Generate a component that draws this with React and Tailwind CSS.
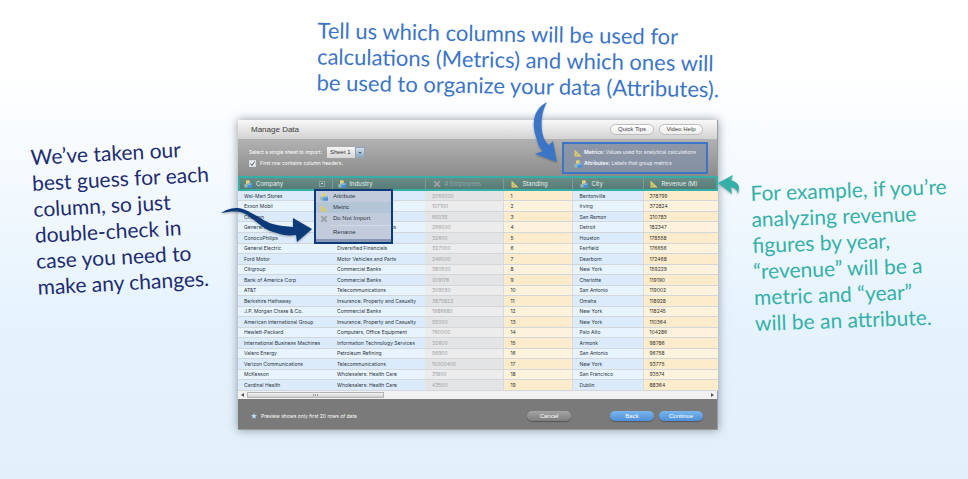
import React from "react";

const columns = [
  { label: "Company", kind: "attribute", width: "w-[94px]", pad: "pl-[6px]", menu: true },
  { label: "Industry", kind: "attribute", width: "w-[93px]", pad: "pl-[5px]" },
  { label: "# Employees", kind: "skip", width: "w-[78px]", pad: "pl-[7px]" },
  { label: "Standing", kind: "metric", width: "w-[69px]", pad: "pl-[7px]" },
  { label: "City", kind: "attribute", width: "w-[71px]", pad: "pl-[7px]" },
  { label: "Revenue (M)", kind: "metric", width: "w-[75px]", pad: "pl-[6px]" },
];

const rows = [
  ["Wal-Mart Stores", "", "2055000", "1", "Bentonville", "378799"],
  ["Exxon Mobil", "", "107100", "2", "Irving", "372824"],
  ["Chevron", "", "65035", "3", "San Ramon", "210783"],
  ["General Motors", "Motor Vehicles and Parts", "266000", "4", "Detroit", "182347"],
  ["ConocoPhilips", "", "32600", "5", "Houston", "178558"],
  ["General Electric", "Diversified Financials", "327000", "6", "Fairfield", "176656"],
  ["Ford Motor", "Motor Vehicles and Parts", "246000", "7", "Dearborn", "172468"],
  ["Citigroup", "Commercial Banks", "380500", "8", "New York", "159229"],
  ["Bank of America Corp", "Commercial Banks", "209176", "9", "Charlotte", "119190"],
  ["AT&T", "Telecommunications", "309050", "10", "San Antonio", "119002"],
  ["Berkshire Hathaway", "Insurance: Property and Casualty", "3875822", "11", "Omaha", "118928"],
  ["J.P. Morgan Chase & Co.", "Commercial Banks", "1986680", "12", "New York", "118245"],
  ["American International Group", "Insurance: Property and Casualty", "55000", "13", "New York", "110364"],
  ["Hewlett-Packard", "Computers, Office Equipment", "760000", "14", "Palo Alto", "104286"],
  ["International Business Machines", "Information Technology Services", "32600", "15", "Armonk", "98786"],
  ["Valero Energy", "Petroleum Refining", "56900", "16", "San Antonio", "96758"],
  ["Verizon Communications", "Telecommunications", "10000400", "17", "New York", "93775"],
  ["McKesson", "Wholesalers: Health Care", "31800", "18", "San Francisco", "93574"],
  ["Cardinal Health", "Wholesalers: Health Care", "43500", "19", "Dublin", "88364"],
];

const cellTone = {
  attribute: ["bg-[#dbebfb] text-[#2d333b]", "bg-[#e7f4fe] text-[#2d333b]"],
  skip: ["bg-[#e3e4e6] text-[#a0a2a5]", "bg-[#ececed] text-[#a0a2a5]"],
  metric: ["bg-[#fdeccb] text-[#33312d]", "bg-[#fdf3dc] text-[#33312d]"],
};

function KindIcon({ kind }) {
  if (kind === "attribute") {
    return (
      <svg viewBox="0 0 16 16" className="h-2 w-2 shrink-0" aria-hidden="true">
        <rect x="4" y="0.5" width="7.500" height="8" rx="2" fill="#e2cf74" />
        <rect x="0.5" y="8" width="7.5" height="7" rx="1" fill="#8fb9a8" />
        <rect x="7" y="7" width="9" height="8.500" rx="1" fill="#4a8fd9" />
        <path d="M7 7h9l-2 2.500h-7z" fill="#8cc0f0" />
      </svg>
    );
  }
  if (kind === "metric") {
    return (
      <svg viewBox="0 0 16 16" className="h-2 w-2 shrink-0" aria-hidden="true">
        <path d="M1 1v14h14.500z M4.500 9v3h3.200z" fill="#dccb6c" fillRule="evenodd" />
      </svg>
    );
  }
  return (
    <svg viewBox="0 0 16 16" className="h-2 w-2 shrink-0" aria-hidden="true">
      <path d="M2.500 2.500l11 11M13.500 2.500l-11 11" stroke="#99a0a6" strokeWidth="3.600" />
    </svg>
  );
}

function ColumnMenu() {
  const item = "flex h-[11px] w-full items-center gap-[5px] pl-[4px] text-left";
  return (
    <div
      role="menu"
      className="absolute top-[69px] left-[76px] z-20 h-[55px] w-[79px] border-2 border-[#0d3a78] bg-[#c1cbdc] text-[6px] text-[#2f3742] shadow-[inset_0_-3px_0_#8797b4]"
    >
      <button role="menuitem" className={item}>
        <KindIcon kind="attribute" />
        Attribute
      </button>
      <button role="menuitem" className={item + " bg-[#b3c5d6]"}>
        <KindIcon kind="metric" />
        Metric
      </button>
      <button role="menuitem" className={item}>
        <KindIcon kind="skip" />
        Do Not Import
      </button>
      <div className="mt-px ml-[15px] h-px bg-[#d3dae6]" />
      <button role="menuitem" className="flex h-[13px] w-full items-center pl-[17px] text-left">
        Rename
      </button>
    </div>
  );
}

function DataTable() {
  return (
    <table className="h-[215px] w-full table-fixed border-collapse font-[Inter,'Liberation_Sans',sans-serif] text-[5px] leading-[8px]">
      <thead>
        <tr className="relative z-10 h-[15px] bg-linear-to-b from-[#6c8f8b] to-[#557873] outline-2 -outline-offset-2 outline-[#35b0a8]">
          {columns.map((c) => (
            <th
              key={c.label}
              scope="col"
              className={`${c.width} ${c.pad} h-[15px] p-0 text-left text-[6px] font-normal whitespace-nowrap ${c.kind === "skip" ? "text-[#8fa8a5]" : "text-[#e4eeec]"} border-r border-[#7b9a96] last:border-r-0`}
            >
              <span className="flex items-center gap-[4px]">
                <KindIcon kind={c.kind} />
                {c.label}
                {c.menu && (
                  <button
                    aria-label="Column options"
                    className="mr-[7px] ml-auto flex h-[6px] w-[6px] items-center justify-center border border-[#86a39f]"
                  >
                    <span className="h-px w-[2px] bg-[#c4d4d2]" />
                  </button>
                )}
              </span>
            </th>
          ))}
        </tr>
      </thead>
      <tbody>
        {rows.map((row, i) => (
          <tr key={row[0]}>
            {row.map((value, j) => (
              <td
                key={columns[j].label}
                className={`${columns[j].pad} ${cellTone[columns[j].kind][i % 2]} ${j > 2 ? "border-l border-l-[#d9dadc]" : ""} border-b border-b-[#d3d7dc] p-0 whitespace-nowrap`}
              >
                {value}
              </td>
            ))}
          </tr>
        ))}
      </tbody>
    </table>
  );
}

function Arrows() {
  return (
    <>
      <svg viewBox="0 0 94 38" className="absolute top-[86px] left-[-18px] z-30 h-[38px] w-[94px] drop-shadow-[0_1px_1px_rgba(0,0,0,0.3)]" aria-hidden="true">
        <path d="M1 7C7 3 12 2 18 2C26 3 31 7 37 10C46 16 53 19 63 20L73 21L73 12L92 23L77 36L76 29C68 30 62 29 57 27C52 26 47 24 43 21C38 17 34 14 30 11C26 8 24 7 20 6C14 5 8 6 1 7Z" fill="#0d3a78" />
      </svg>
      <svg viewBox="0 0 26 62" className="absolute top-[-19px] left-[294px] z-30 h-[62px] w-[26px] drop-shadow-[0_1px_1px_rgba(0,0,0,0.25)]" aria-hidden="true">
        <path d="M15 1C7 5 3 12 2 19C1 27 3 33 5 39C6 44 8 48 11 50L3 53L25 61L21 40L17 44C13 41 11 36 10 30C9 19 10 10 15 1Z" fill="#3c75c6" />
      </svg>
      <svg viewBox="0 0 24 22" className="absolute top-[54px] left-[479px] z-30 h-[22px] w-[24px] drop-shadow-[0_1px_1px_rgba(0,0,0,0.3)]" aria-hidden="true">
        <path d="M1 9L16 1L14 6C19 8 22 10 22 14L21 20C20 16 18 14 14 13L15 20Z" fill="#35b0a8" />
      </svg>
    </>
  );
}

function ManageData() {
  const pill = "h-[10px] w-[44px] rounded-full text-center text-[6px] leading-[10px] text-white shadow-[0_1px_1px_rgba(0,0,0,0.3)]";
  const helpPill = "h-[11px] w-[44px] rounded-full border border-[#bdbdbd] bg-linear-to-b from-white to-[#ececec] text-center text-[6px] leading-[9px] text-[#444]";
  return (
    <section className="relative font-['Liberation_Sans',sans-serif]">
      <div className="border-r border-b border-[#9a9a9a] shadow-[0_0_9px_rgba(60,70,80,0.55)]">
        <header className="flex h-[19px] items-center gap-[5px] bg-linear-to-b from-[#f8f8f8] to-[#d2d2d2] pr-[14px] pl-[13px]">
          <h1 className="mr-auto text-[8px] text-[#3f3f3f]">Manage Data</h1>
          <button className={helpPill}>Quick Tips</button>
          <button className={helpPill}>Video Help</button>
        </header>

        <div className="flex h-[37px] items-start bg-linear-to-b from-[#b2b2b2] to-[#8c8c8c] pl-[11px] font-[Inter,'Liberation_Sans',sans-serif] text-[5px] leading-[9px] text-white">
          <div className="flex flex-col gap-px pt-[8px]">
            <div className="flex items-center gap-[5px]">
              <label htmlFor="sheet">Select a single sheet to import:</label>
              <span className="flex h-[11px]">
                <select
                  id="sheet"
                  className="h-[11px] w-[28px] appearance-none bg-linear-to-b from-[#f4f4f4] to-[#d8d8d8] pl-[3px] font-['Liberation_Sans',sans-serif] text-[6px] leading-[11px] text-[#333]"
                >
                  <option>Sheet 1</option>
                </select>
                <span className="flex w-[10px] items-center justify-center border border-[#8ea4b8] bg-linear-to-b from-[#cfdeea] to-[#8fabc3]">
                  <svg viewBox="0 0 6 4" className="h-[2px] w-[4px]" aria-hidden="true">
                    <path d="M0 0h6l-3 4z" fill="#44586c" />
                  </svg>
                </span>
              </span>
            </div>
            <label className="flex items-center gap-[4px]">
              <span className="grid">
                <input
                  type="checkbox"
                  defaultChecked
                  className="peer col-start-1 row-start-1 h-[7px] w-[7px] appearance-none border border-[#d4dbe2] bg-[#eef1f4]"
                />
                <svg viewBox="0 0 7 7" className="pointer-events-none col-start-1 row-start-1 hidden h-[7px] w-[7px] peer-checked:block" aria-hidden="true">
                  <path d="M1.500 3.500l1.500 2l2.500-4" fill="none" stroke="#4a5563" />
                </svg>
              </span>
              First row contains column headers.
            </label>
          </div>
          <ul className="mt-[3px] mr-[9px] ml-auto flex h-[32px] w-[146px] flex-col justify-center gap-[2px] border-2 border-[#3c75c6] bg-[#8491a9]/80 pl-[10px] text-[#eef1f6]">
            <li className="flex items-center gap-[2px] whitespace-nowrap">
              <KindIcon kind="metric" />
              <span><b>Metrics:</b> Values used for analytical calculations</span>
            </li>
            <li className="flex items-center gap-[2px] whitespace-nowrap">
              <KindIcon kind="attribute" />
              <span><b>Attributes:</b> Labels that group metrics</span>
            </li>
          </ul>
        </div>

        <DataTable />

        <div className="flex h-[8px] items-center bg-[#f1f1f1] px-[3px]">
          <svg viewBox="0 0 3 4" className="h-1 w-[3px]" aria-hidden="true"><path d="M3 0v4l-3-2z" fill="#555" /></svg>
          <div className="ml-[3px] flex h-[6px] w-[137px] items-center justify-center gap-px border border-[#b4b4b4] bg-linear-to-b from-[#f4f4f4] to-[#cfcfcf]">
            <span className="h-[2px] w-px bg-[#999]" />
            <span className="h-[2px] w-px bg-[#999]" />
            <span className="h-[2px] w-px bg-[#999]" />
          </div>
          <svg viewBox="0 0 3 4" className="ml-auto h-1 w-[3px]" aria-hidden="true"><path d="M0 0v4l3-2z" fill="#555" /></svg>
        </div>

        <footer className="flex h-[30px] items-center bg-[#7a7a7a] pt-[3px] pr-[14px] pl-[13px] text-white">
          <svg viewBox="0 0 10 10" className="h-[6px] w-[6px]" aria-hidden="true">
            <path d="M5 0l1.400 3.200l3.500.4l-2.600 2.300l.8 3.600L5 7.700L1.900 9.500l.8-3.600L.1 3.600l3.500-.4z" fill="#b5dcf5" />
          </svg>
          <p className="mr-auto ml-[4px] font-[Inter,'Liberation_Sans',sans-serif] text-[5px] leading-[8px]">Preview shows only first 20 rows of data</p>
          <button className={pill + " mr-[39px] bg-linear-to-b from-[#a5a5a5] to-[#7d7d7d]"}>Cancel</button>
          <button className={pill + " mr-[5px] bg-linear-to-b from-[#79b6ee] to-[#4f8ed6]"}>Back</button>
          <button className={pill + " bg-linear-to-b from-[#79b6ee] to-[#4f8ed6]"}>Continue</button>
        </footer>
      </div>
      <ColumnMenu />
      <Arrows />
    </section>
  );
}

export default function App() {
  const note = "origin-top-left font-[Lato,'Liberation_Sans',sans-serif] leading-[26px] whitespace-nowrap";
  return (
    <main className="grid min-h-screen grid-cols-[minmax(0,238fr)_minmax(0,480fr)_minmax(0,250fr)] grid-rows-[auto_1fr] items-start overflow-hidden bg-linear-to-b from-white from-15% via-[#e6f3fd] via-65% to-[#e1f0fa]">
      <p className={note + " col-start-2 rotate-1 pt-4 pb-[26px] pl-[80px] text-[22px] text-[#3c75c6]"}>
        Tell us which columns will be used for
        <br />
        calculations (Metrics) and which ones will
        <br />
        be used to organize your data (Attributes).
      </p>
      <div className="col-start-1 row-start-2 pt-6 pl-[30px]">
        <p className={note + " -rotate-3 text-[21px] text-[#1f2c70]"}>
          We’ve taken our
          <br />
          best guess for each
          <br />
          column, so just
          <br />
          double-check in
          <br />
          case you need to
          <br />
          make any changes.
        </p>
      </div>
      <div className="col-start-2 row-start-2">
        <ManageData />
      </div>
      <div className="col-start-3 row-start-2 pt-[60px] pl-8">
        <p className={note + " -rotate-2 text-[21px] text-[#35b0a8]"}>
          For example, if you’re
          <br />
          analyzing revenue
          <br />
          figures by year,
          <br />
          “revenue” will be a
          <br />
          metric and “year”
          <br />
          will be an attribute.
        </p>
      </div>
    </main>
  );
}
